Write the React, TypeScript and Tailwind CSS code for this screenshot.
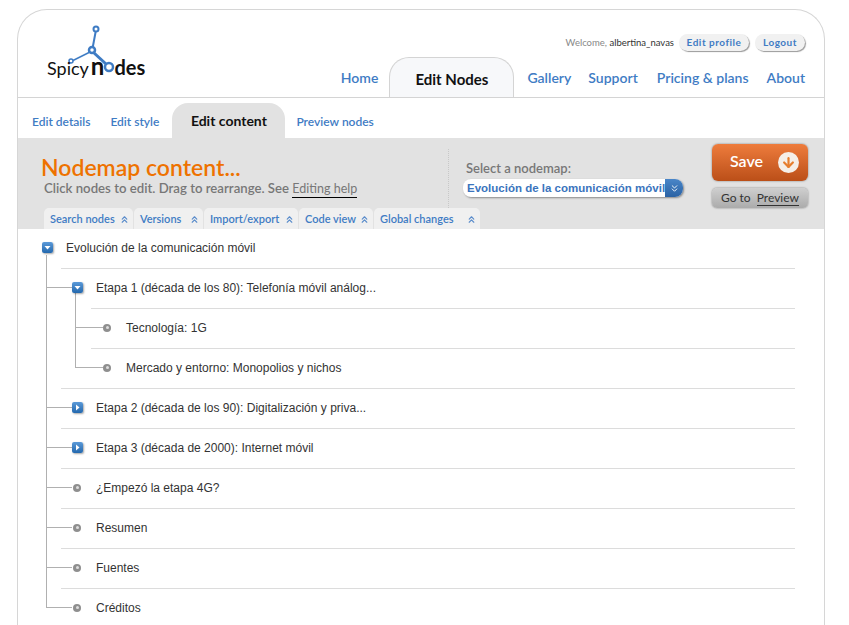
import { ArrowDown, ChevronsDown, ChevronsUp } from "lucide-react";

const brandFont = "font-['Lato',sans-serif]";

const mainNav = [
  { label: "Home", className: "ml-0" },
  { label: "Edit Nodes", active: true },
  { label: "Gallery", className: "ml-[13px]" },
  { label: "Support", className: "ml-[17px]" },
  { label: "Pricing & plans", className: "ml-[19px]" },
  { label: "About", className: "ml-[18px]" },
];

const toolTabs = [
  { label: "Search nodes", className: "w-[89px]" },
  { label: "Versions", className: "w-[69px]" },
  { label: "Import/export", className: "w-[94px]" },
  { label: "Code view", className: "w-[74px]" },
  { label: "Global changes", className: "w-[106px]" },
];

type Kind = "open" | "closed" | "leaf";

const rows: { text: string; depth: 1 | 2; kind: Kind }[] = [
  { text: "Etapa 1 (década de los 80): Telefonía móvil análog...", depth: 1, kind: "open" },
  { text: "Tecnología: 1G", depth: 2, kind: "leaf" },
  { text: "Mercado y entorno: Monopolios y nichos", depth: 2, kind: "leaf" },
  { text: "Etapa 2 (década de los 90): Digitalización y priva...", depth: 1, kind: "closed" },
  { text: "Etapa 3 (década de 2000): Internet móvil", depth: 1, kind: "closed" },
  { text: "¿Empezó la etapa 4G?", depth: 1, kind: "leaf" },
  { text: "Resumen", depth: 1, kind: "leaf" },
  { text: "Fuentes", depth: 1, kind: "leaf" },
  { text: "Créditos", depth: 1, kind: "leaf" },
];

const NodeIcon = ({ kind }: { kind: Kind }) => {
  if (kind === "leaf") {
    return (
      <span className="mr-[1px] flex h-2 w-2 items-center justify-center rounded-full bg-[#8f8f8f]">
        <span className="h-[3px] w-[3px] rounded-full bg-[#dedede]" />
      </span>
    );
  }
  return (
    <span className="flex h-[11px] w-[11px] items-center justify-center rounded-[2px] bg-gradient-to-b from-[#5b9ad8] to-[#2368ae] shadow-[1px_1px_2px_rgba(0,0,0,0.35)]">
      <svg width="7" height="7" viewBox="0 0 7 7">
        {kind === "open" ? <path d="M0.5 2 H6.5 L3.5 5.5 Z" fill="#fff" /> : <path d="M2 0.5 V6.5 L5.5 3.5 Z" fill="#fff" />}
      </svg>
    </span>
  );
};

const TreeRow = ({ text, depth, kind }: { text: string; depth: 1 | 2; kind: Kind }) => (
  <div className={`relative flex h-10 items-center border-t border-[#dcdcdc] pb-[2px] ${depth === 1 ? "ml-[43px]" : "ml-[73px]"}`}>
    <span className={`absolute top-[18px] h-px bg-[#b0b0b0] ${depth === 1 ? "-left-[15px] w-[26px]" : "-left-[15px] w-[29px]"}`} />
    <span className="relative ml-[11px] mr-[13px] flex w-[11px] justify-center">
      <NodeIcon kind={kind} />
    </span>
    <span className="text-xs text-[#333]">{text}</span>
  </div>
);

const Logo = () => (
  <div className="relative ml-[29px] h-[87px] w-[110px] shrink-0">
    <svg className="absolute left-0 top-0" width="110" height="70" viewBox="0 0 110 70">
      <g stroke="#3f7cc4" fill="none">
        <path d="M49 20 L45 41" strokeWidth="2" />
        <path d="M43 42 L25 51" strokeWidth="1.5" />
        <path d="M46 42 L59 54" strokeWidth="3" />
        <circle cx="49" cy="19" r="2.5" strokeWidth="2" fill="#fff" />
        <circle cx="45" cy="40" r="3" strokeWidth="2.5" fill="#fff" />
        <circle cx="24" cy="51" r="2" strokeWidth="1.5" fill="#fff" />
        <circle cx="62" cy="57" r="4" strokeWidth="2.5" fill="#fff" />
      </g>
    </svg>
    <div className={`absolute left-0 top-[43px] flex h-[28px] items-baseline whitespace-nowrap text-[18px] leading-7 text-[#111] ${brandFont}`}>
      <span>Spicy</span>
      <span className="ml-[2px] text-[24px] font-bold leading-none">n</span>
      <span className="ml-[10px] text-[20px] font-bold">des</span>
    </div>
  </div>
);

export default function App() {
  return (
    <div className="h-[625px] w-[849px] overflow-hidden bg-white">
      <div className={`ml-[17px] mt-[9px] w-[808px] rounded-t-[30px] border border-b-0 border-[#d6d6d6] bg-white ${brandFont}`}>
        {/* en-tete */}
        <header className="flex h-[88px] border-b border-[#d4d4d4]">
          <Logo />
          <div className="flex flex-1 flex-col items-end pr-[19px]">
            <div className="mt-[22px] flex h-[20px] items-center">
              <span className="mr-[5px] mt-[3px] text-[9.5px] text-[#888]">
                Welcome, <span className="text-[#333]">albertina_navas</span>
              </span>
              <button className="h-[17px] w-[70px] rounded-full bg-[#f1f1f1] text-[10px] font-bold tracking-[0.5px] text-[#3f7cc4] shadow-[1px_1px_1px_#999]">Edit profile</button>
              <button className="ml-[6px] h-[17px] w-[50px] rounded-full bg-[#f1f1f1] text-[10px] font-bold tracking-[0.5px] text-[#3f7cc4] shadow-[1px_1px_1px_#999]">Logout</button>
            </div>
            <nav className="mt-[6px] flex h-[39px] items-end">
              {mainNav.map((item) =>
                item.active ? (
                  <div key={item.label} className="ml-[11px] flex h-[40px] w-[125px] items-center justify-center rounded-t-[20px] border border-b-0 border-[#d4d4d4] bg-[#f7f8fa] pt-[3px] text-[15px] font-bold text-[#111]">
                    {item.label}
                  </div>
                ) : (
                  <a key={item.label} className={`flex h-[39px] items-center pb-[1px] text-[14px] font-semibold text-[#3f7cc4] ${item.className}`}>
                    {item.label}
                  </a>
                ),
              )}
            </nav>
          </div>
        </header>

        {/* sous-navigation */}
        <div className="flex h-[40px] items-end pl-[14px] text-xs font-semibold text-[#3f7cc4]">
          <a className="flex h-[35px] items-center pt-[2px]">Edit details</a>
          <a className="ml-[20px] flex h-[35px] items-center pt-[2px]">Edit style</a>
          <div className="ml-[13px] flex h-[35px] w-[113px] items-center justify-center rounded-t-[16px] bg-[#e2e2e2] pt-[2px] text-[14px] font-bold text-[#111]">Edit content</div>
          <a className="ml-[11px] flex h-[35px] items-center pt-[2px]">Preview nodes</a>
        </div>

        {/* bandeau gris */}
        <div className="flex h-[91px] flex-col bg-[#e2e2e2]">
          <div className="flex h-[70px]">
            <div className="w-[430px] pl-[23px] pt-[15px]">
              <h1 className="text-[23px] font-semibold leading-[28px] text-[#ee7200]">Nodemap content...</h1>
              <p className="-mt-[2px] ml-[3px] whitespace-nowrap text-[13.2px] font-semibold leading-[18px] text-[#777]">
                Click nodes to edit. Drag to rearrange. See <a className="border-b border-black pb-[1px] text-[12.5px] font-normal">Editing help</a>
              </p>
            </div>
            <div className="mt-[11px] h-[59px] w-[18px] shrink-0 border-l border-dotted border-[#c8c8c8]" />
            <div className="w-[246px] pt-[21px]">
              <div className="text-[13px] font-semibold leading-[18px] text-[#777]">Select a nodemap:</div>
              <div className="-ml-[3px] mt-[2px] flex h-[18px] w-[220px] overflow-hidden rounded-[8px] bg-white shadow-[1px_1px_2px_#888]">
                <span className="flex-1 whitespace-nowrap pl-[4px] font-['Liberation_Sans',sans-serif] text-[11.5px] font-bold leading-[18px] text-[#3a74bd]">Evolución de la comunicación móvil</span>
                <span className="flex w-[19px] items-center justify-center bg-gradient-to-b from-[#4a86c8] to-[#2a62a4]">
                  <ChevronsDown size={11} color="#fff" />
                </span>
              </div>
            </div>
            <div className="flex w-[96px] flex-col pt-[6px]">
              <button className="flex h-[37px] items-center justify-between rounded-[6px] bg-gradient-to-b from-[#ee7c3c] to-[#bb4f18] pl-[18px] pr-[9px] text-[16px] font-semibold text-white shadow-[0_0_2px_#777]">
                <span className="pb-[3px]">Save</span>
                <span className="flex h-[21px] w-[21px] items-center justify-center rounded-full bg-[#f5efe8]">
                  <ArrowDown size={15} strokeWidth={3.5} color="#e67e2e" />
                </span>
              </button>
              <button className="mt-[7px] h-[20px] rounded-[5px] bg-gradient-to-b from-[#cfcfcf] to-[#ababab] text-xs text-[#333] shadow-[0_0_2px_#777]">
                Go to <span className="ml-[3px] border-b border-[#333]">Preview</span>
              </button>
            </div>
          </div>
          <div className="ml-[26px] flex h-[21px] gap-px">
            {toolTabs.map((tab) => (
              <div key={tab.label} className={`flex items-center justify-between rounded-t-[5px] bg-[#f0f0f0] pl-[6px] pr-[3px] pt-[1px] text-[11px] font-semibold text-[#3f7cc4] ${tab.className}`}>
                <span className="whitespace-nowrap">{tab.label}</span>
                <ChevronsUp size={11} color="#5a8ccb" strokeWidth={2.5} className="shrink-0" />
              </div>
            ))}
          </div>
        </div>

        {/* arbre des noeuds */}
        <div className="relative mr-[29px] font-['Liberation_Sans',sans-serif]">
          <span className="absolute left-[28px] top-[26px] h-[352px] w-px bg-[#b0b0b0]" />
          <span className="absolute left-[57px] top-[64px] h-[75px] w-px bg-[#b0b0b0]" />
          <div className="flex h-[39px] items-center pb-[2px] pl-[24px]">
            <span className="relative mr-[13px] flex w-[11px]">
              <NodeIcon kind="open" />
            </span>
            <span className="text-xs text-[#333]">Evolución de la comunicación móvil</span>
          </div>
          {rows.map((row) => (
            <TreeRow key={row.text} {...row} />
          ))}
        </div>
      </div>
    </div>
  );
}
